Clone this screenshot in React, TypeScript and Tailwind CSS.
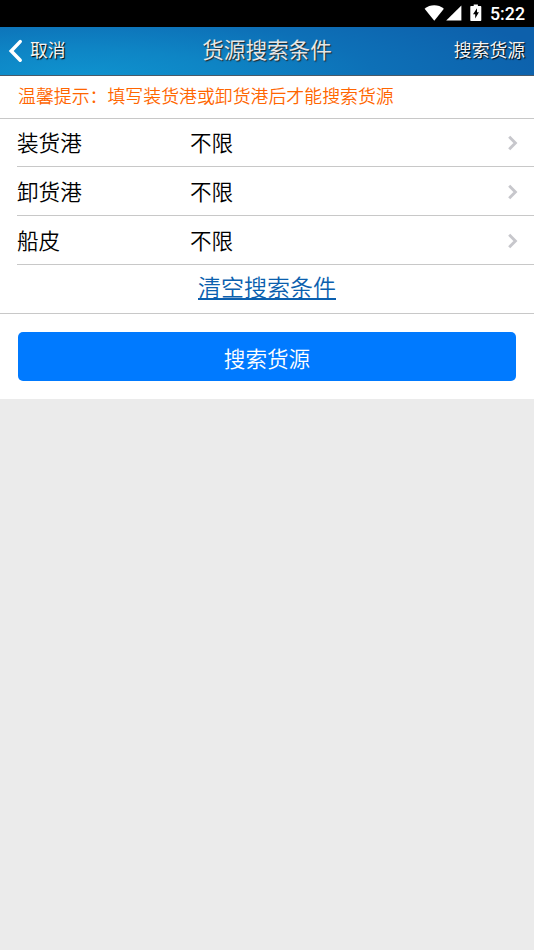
import React from "react";

const conditions = [
  { label: "装货港", value: "不限", height: "h-12 pb-px" },
  { label: "卸货港", value: "不限", height: "h-[49px]" },
  { label: "船皮", value: "不限", height: "h-[49px]" },
];

function StatusBar() {
  return (
    <div className="flex h-[27px] items-center bg-black pl-[424px] text-white">
      <svg width="64" height="27" viewBox="0 0 64 27" fill="#fff" className="shrink-0">
        <path d="M.6 8.7C6.1 4.1 14.4 4.1 19.9 8.7L10.3 20.7Z" />
        <path d="M37.4 5.4V20.6H22.2Z" />
        <path
          fillRule="evenodd"
          d="M49.7 4.6h4.2v1.3h2.4c.6 0 1 .4 1 1v13c0 .6-.4 1-1 1h-9c-.6 0-1-.4-1-1V6.9c0-.6.4-1 1-1h2.4ZM53 8.2L49 14.2H51.2V18.6L54.9 12.3H53Z"
        />
      </svg>
      <span className="ml-[2px] mt-px whitespace-nowrap font-['Roboto',sans-serif] text-[17.8px] leading-none font-medium">
        5:22
      </span>
    </div>
  );
}

function Header() {
  return (
    <header className="grid h-[49px] grid-cols-[1fr_auto_1fr] items-center border-b border-[#4a5a68] bg-[radial-gradient(ellipse_480px_95px_at_78px_50px,#0f93cf_0%,#0e85c5_30%,#0d70b7_62%,#0d60ab_100%)] text-white">
      <button className="flex h-full items-center pl-2">
        <svg width="16" height="24" viewBox="0 0 16 24" fill="none" stroke="#fff" strokeWidth="3.5" strokeLinecap="round" strokeLinejoin="miter">
          <path d="M12.2 2.6L3.2 12L12.2 21.2" />
        </svg>
        <span className="ml-[6px] pb-[2px] text-[17.8px] leading-none text-[#f4f4f4] [text-shadow:1px_1px_1px_#000]">取消</span>
      </button>
      <h1 className="pb-1 text-[21.6px] leading-none text-[#e6e6e6] [text-shadow:1px_1px_1px_#222]">货源搜索条件</h1>
      <button className="pr-[9px] pb-[2px] text-right text-[17.8px] leading-none text-[#f4f4f4] [text-shadow:1px_1px_1px_#000]">搜索货源</button>
    </header>
  );
}

export default function App() {
  return (
    <div className="min-h-[950px] w-[534px] bg-[#ebebeb] font-['Noto_Sans_CJK_SC',sans-serif]">
      <StatusBar />
      <Header />
      <main className="bg-white">
        <p className="flex h-[43px] items-center border-b border-[#c8c8c8] pb-[3px] pl-[18px] text-[17.9px] leading-none font-[350] whitespace-nowrap text-[#ff6600]">
          温馨提示：填写装货港或卸货港后才能搜索货源
        </p>
        <ul className="pl-[17px]">
          {conditions.map((item) => (
            <li
              key={item.label}
              className={`flex items-center border-b border-[#c8c8c8] pr-4 text-[21.6px] leading-none font-[350] text-black ${item.height}`}
            >
              <span className="w-[173px]">{item.label}</span>
              <span className="flex-1">{item.value}</span>
              <svg width="10" height="16" viewBox="0 0 10 16" fill="none" stroke="#c7c7cc" strokeWidth="2.9" className="translate-y-px">
                <path d="M1.2 1.7L7.4 8L1.2 14.3" />
              </svg>
            </li>
          ))}
        </ul>
        <div className="flex h-[49px] items-center justify-center border-b border-[#c8c8c8] pb-[5px] text-[23px] leading-none font-[350] text-[#0b5fae]">
          <a className="underline decoration-2 underline-offset-[2px]">清空搜索条件</a>
        </div>
        <div className="px-[18px] pt-[18px] pb-[18px]">
          <button className="flex h-[49px] w-full items-center justify-center rounded-[5px] bg-[#007aff] pt-[2px] text-[21.6px] leading-none font-[350] text-white">
            搜索货源
          </button>
        </div>
      </main>
    </div>
  );
}
